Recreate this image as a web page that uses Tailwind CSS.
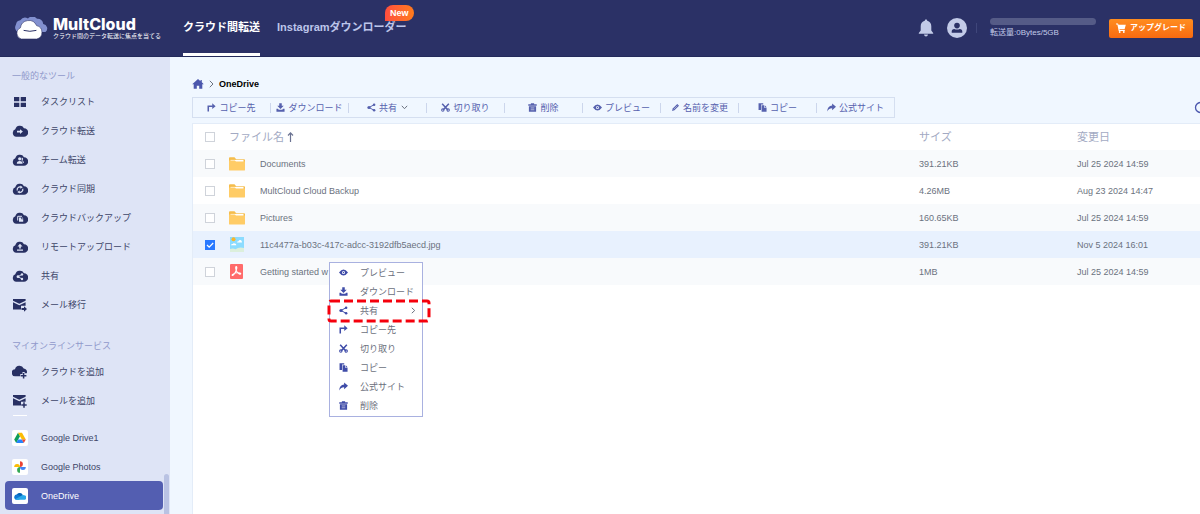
<!DOCTYPE html>
<html lang="ja">

<head>
    <meta charset="UTF-8">
    <title>MultCloud - OneDrive</title>
    <meta name="viewport" content="width=device-width, initial-scale=1.0">
    <script src="https://cdn.jsdelivr.net/npm/@tailwindcss/browser@4"></script>
</head>

<body class="flex h-screen flex-col overflow-hidden bg-[#f0f7ff] font-['Liberation_Sans','Noto_Sans_CJK_JP',sans-serif] text-[9px] leading-3 text-[#6b7280]">

    <!-- Shared icons -->
    <svg class="hidden">
        <symbol id="i-cloud" viewBox="0 0 16 12">
            <path fill="#283063" d="M4.2 11.8A3.9 3.9 0 0 1 3.3 4.3 4.7 4.7 0 0 1 12 3.2a4.3 4.3 0 0 1-.2 8.6z" />
        </symbol>
        <symbol id="i-copyto" viewBox="0 0 10 10">
            <path fill="none" stroke="currentColor" stroke-width="1.7" d="M1.4 9.5V3.6H6.5" />
            <path fill="currentColor" d="M5.8 .4 9.6 3.6 5.8 6.8z" />
        </symbol>
        <symbol id="i-download" viewBox="0 0 10 10">
            <path fill="currentColor" d="M3.6 .3h2.8v2.8h2.200L5 6.600 1.400 3.100h2.200zM.5 6.500h1.600l1 1h3.800l1-1h1.600v3.200H.5z" />
        </symbol>
        <symbol id="i-share" viewBox="0 0 10 10">
            <path fill="none" stroke="currentColor" stroke-width="1.1" d="M7.9 1.9 2.2 5l5.7 3.1" />
            <circle cx="2.2" cy="5" r="1.8" fill="currentColor" />
            <circle cx="7.9" cy="1.9" r="1.4" fill="currentColor" />
            <circle cx="7.9" cy="8.1" r="1.4" fill="currentColor" />
        </symbol>
        <symbol id="i-cut" viewBox="0 0 10 10">
            <path fill="none" stroke="currentColor" stroke-width="1.7" d="M1.3 .8 7.4 7.6M8.7 .8 2.6 7.6" />
            <circle cx="2" cy="7.8" r="1.3" fill="none" stroke="currentColor" stroke-width="1.2" />
            <circle cx="8" cy="7.8" r="1.3" fill="none" stroke="currentColor" stroke-width="1.2" />
        </symbol>
        <symbol id="i-trash" viewBox="0 0 10 10">
            <path fill="currentColor" d="M3.2.2h3.600v1.200h2.900v1.600H.3V1.400h2.900zM1 3.500h8V9.800H1z" />
            <path stroke="#fff" stroke-width=".6" d="M3 5.500h4M3 7.500h4" />
        </symbol>
        <symbol id="i-eye" viewBox="0 0 10 10">
            <path fill="currentColor" fill-rule="evenodd" d="M0 5Q5-1.800 10 5 5 11.800 0 5zM5 3.300a1.700 1.700 0 1 0 0 3.400 1.700 1.700 0 0 0 0-3.400z" />
            <circle cx="5" cy="5" r=".8" fill="currentColor" />
        </symbol>
        <symbol id="i-pencil" viewBox="0 0 10 10">
            <path fill="currentColor" d="M1.200 8.800 1.900 6.200 7 1.100 8.900 3 3.800 8.100z" />
            <path stroke="#fff" stroke-width=".5" d="M3 7 7 3" />
        </symbol>
        <symbol id="i-copy" viewBox="0 0 10 10">
            <path fill="currentColor" d="M.6.3h5.200v1.500H3.400v6H.6zM4 2.600h2.800v2.800h2.700v4.300H4zM7.500 2.600l2 2.100h-2z" />
        </symbol>
        <symbol id="i-site" viewBox="0 0 10 10">
            <path fill="currentColor" d="M5.700.6 10 4.300 5.700 8V5.900C3.400 5.800 1.700 6.800.2 9.400.4 5.400 2.300 3 5.700 2.700z" />
        </symbol>
        <symbol id="i-folder" viewBox="0 0 16 14">
            <path fill="#f5bd4c" d="M0 1.200Q0 .3.900.3h4.600l1.700 1.900h7.900q.9 0 .9.900V6H0z" />
            <path fill="#fff" d="M1.500 2.900h13v3h-13z" />
            <path fill="#ffcc66" d="M0 3.500h5.800L7 4.500h9v8.200q0 .9-.9.900H.9q-.9 0-.9-.9z" />
        </symbol>
        <symbol id="i-mail" viewBox="0 0 16 14">
            <path fill="#283063" d="M1 1h12.600v1.700L7.300 5.800 1 2.700zM1 4.300l6.300 3 6.300-3v3.500H9v3.700H1z" />
        </symbol>
    </svg>

    <header class="flex h-[57px] shrink-0 items-center border-b border-[#232a5b] bg-[#2b3166] pl-[14px] pr-[7px] text-white">
        <a href="#" class="flex w-[169px] items-center">
            <svg class="mr-[5px] h-[23px] w-[34px]" viewBox="0 0 34 23">
                <path fill="#8290cf" d="M3.500 15A5.500 5.500 0 0 1 2 7.500 5 5 0 0 1 6.300 3.200 6 6 0 0 1 14 1.500a6 6 0 0 1 9 .2 5.500 5.500 0 0 1 6.200 5.300A4.500 4.500 0 0 1 31.500 15z" />
                <path fill="#fff" stroke="#2b3166" stroke-width=".6" d="M7.200 22A6 6 0 0 1 6.400 10.800 8.500 8.500 0 0 1 22.600 8.600 6.900 6.900 0 0 1 22.800 22z" />
                <path fill="none" stroke="#2b3166" stroke-width="1" stroke-linecap="round" d="M10 13.500q5.700 1.700 12 0" />
            </svg>
            <span class="whitespace-nowrap">
                <span class="block font-['Inter',sans-serif] text-[16px] leading-4 font-extrabold">MultCloud</span>
                <span class="block text-[6px] leading-2">クラウド間のデータ転送に焦点を当てる</span>
            </span>
        </a>
        <nav class="flex h-full gap-[17px] text-[11px] font-bold whitespace-nowrap">
            <a href="#" class="flex items-center border-b-3 border-white">クラウド間転送</a>
            <a href="#" class="relative flex items-center border-b-3 border-transparent text-[#bcc5ea]">Instagramダウンローダー
                <span class="absolute top-[5px] -right-[7px] rounded-full rounded-bl-none bg-linear-to-r from-[#ff4d3d] to-[#ff7a1a] px-[5px] py-[2px] text-[9px] leading-3 text-white">New</span>
            </a>
        </nav>
        <div class="ml-auto flex items-center">
            <button type="button" aria-label="通知">
                <svg class="h-[18px] w-4" viewBox="0 0 16 18">
                    <path fill="#c3cbe8" d="M8 .5c.8 0 1.200.5 1.200 1.300 2.700.6 4.100 2.600 4.100 5.400v4.300l1.900 2.500v.8H.8V14l1.900-2.500V7.200c0-2.800 1.400-4.800 4.100-5.400C6.800 1 7.200.5 8 .5zM6 15.600h4c-.2 1.200-1 1.900-2 1.900s-1.800-.7-2-1.900z" />
                </svg>
            </button>
            <button type="button" aria-label="アカウント" class="ml-[13px]">
                <svg class="size-5" viewBox="0 0 20 20">
                    <circle cx="10" cy="10" r="10" fill="#c3cbe8" />
                    <circle cx="10" cy="7.600" r="2.800" fill="#2b3166" />
                    <path fill="#2b3166" d="M4.700 14.800v-1.300Q4.700 11 7.300 11q2.700 1.200 5.400 0 2.600 0 2.600 2.500v1.300z" />
                </svg>
            </button>
            <div class="ml-[9px] h-[10px] w-px bg-[#3f467a]"></div>
            <div class="ml-[13px] w-[106px] text-[8px] leading-[10px] text-[#c3cbe8]">
                <div class="mb-[3px] h-[7px] rounded-full bg-[#555b87]"></div>
                転送量:0Bytes/5GB
            </div>
            <button type="button" class="ml-[13px] flex h-[19px] w-[84px] items-center justify-center gap-1 rounded-xs bg-linear-to-b from-[#ff8d1f] to-[#f96a10] text-[8px] font-bold whitespace-nowrap">
                <svg class="size-[10px]" viewBox="0 0 10 10">
                    <path fill="#fff" d="M0 .5h2l.5 1.300h7.300L8.600 6.200H3.500l.1.800h5.200v.9H2.700L1.400 1.500H0z" />
                    <circle cx="3.700" cy="9" r=".9" fill="#fff" />
                    <circle cx="7.800" cy="9" r=".9" fill="#fff" />
                </svg>
                アップグレード
            </button>
        </div>
    </header>

    <div class="flex min-h-0 flex-1">
        <aside class="relative w-[170px] shrink-0 overflow-hidden bg-[#dee4f6] text-[#3d4568]">
            <h2 class="flex h-[30px] items-center pt-2 pl-3 text-[#9099cb]">一般的なツール</h2>
            <nav>
                <a href="#" class="flex h-[29px] items-center gap-[13px] pl-3">
                    <svg class="h-[14px] w-4" viewBox="0 0 16 14">
                        <path fill="#283063" d="M2 2h5.300v4.300H2zM8.700 2H14v4.300H8.700zM2 7.700h5.300V12H2zM8.700 7.700H14V12H8.700z" />
                    </svg>
                    タスクリスト
                </a>
                <a href="#" class="flex h-[29px] items-center gap-[13px] pl-3">
                    <svg class="h-3 w-4" viewBox="0 0 16 12">
                        <use href="#i-cloud" />
                        <path fill="#dee4f6" d="M5 5.800h3V4.200L10.900 6.600 8 9V7.400H5z" />
                    </svg>
                    クラウド転送
                </a>
                <a href="#" class="flex h-[29px] items-center gap-[13px] pl-3">
                    <svg class="h-3 w-4" viewBox="0 0 16 12">
                        <use href="#i-cloud" />
                        <circle cx="7.700" cy="4.800" r="1.600" fill="#dee4f6" />
                        <path fill="#dee4f6" d="M4.800 9.700Q4.800 7 7.700 7t2.900 2.700zM9.800 3.400a1.500 1.500 0 0 1 .3 2.900q1.800.6 1.800 2.600h-.8q-.2-1.600-1.500-2.400z" />
                    </svg>
                    チーム転送
                </a>
                <a href="#" class="flex h-[29px] items-center gap-[13px] pl-3">
                    <svg class="h-3 w-4" viewBox="0 0 16 12">
                        <use href="#i-cloud" />
                        <path fill="none" stroke="#dee4f6" stroke-width="1.200" d="M5.300 7.500A2.700 2.700 0 0 1 9 4.200M10.700 5.700A2.700 2.700 0 0 1 7 9" />
                        <path fill="#dee4f6" d="M8.300 2.600 10.800 4.200 8.300 5.700zM7.700 7.500 5.200 9l2.500 1.600z" />
                    </svg>
                    クラウド同期
                </a>
                <a href="#" class="flex h-[29px] items-center gap-[13px] pl-3">
                    <svg class="h-3 w-4" viewBox="0 0 16 12">
                        <use href="#i-cloud" />
                        <path fill="none" stroke="#dee4f6" d="M5.700 8.500V4.300h4.300" />
                        <path fill="#dee4f6" d="M7 5.600h2.300v1.600h1.900v2.600H7zM10 5.200l1.500 1.400H10z" />
                    </svg>
                    クラウドバックアップ
                </a>
                <a href="#" class="flex h-[29px] items-center gap-[13px] pl-3">
                    <svg class="h-3 w-4" viewBox="0 0 16 12">
                        <use href="#i-cloud" />
                        <path fill="#dee4f6" d="M8 2.800 10.500 5.400H8.800v2.200H7.200V5.400H5.500zM5 8.600h6v1.200H5z" />
                    </svg>
                    リモートアップロード
                </a>
                <a href="#" class="flex h-[29px] items-center gap-[13px] pl-3">
                    <svg class="h-3 w-4" viewBox="0 0 16 12">
                        <use href="#i-cloud" />
                        <path fill="none" stroke="#dee4f6" stroke-width=".9" d="M10 4.400 6 6.700l4 2.300" />
                        <circle cx="6" cy="6.700" r="1.400" fill="#dee4f6" />
                        <circle cx="10" cy="4.400" r="1.200" fill="#dee4f6" />
                        <circle cx="10" cy="9" r="1.200" fill="#dee4f6" />
                    </svg>
                    共有
                </a>
                <a href="#" class="flex h-[29px] items-center gap-[13px] pl-3">
                    <svg class="h-[14px] w-4" viewBox="0 0 16 14">
                        <use href="#i-mail" />
                        <path fill="#283063" d="M9.500 10h2.500V8.300l3 2.700-3 2.700V12H9.500z" />
                    </svg>
                    メール移行
                </a>
            </nav>
            <h2 class="flex h-[38px] items-center pt-4 pl-3 text-[#9099cb]">マイオンラインサービス</h2>
            <nav>
                <a href="#" class="flex h-[29px] items-center gap-[13px] pl-3">
                    <svg class="h-[14px] w-4" viewBox="0 0 16 14">
                        <path fill="#283063" d="M3.700 11.300A3.400 3.400 0 0 1 3 4.200 4.600 4.600 0 0 1 11.700 3.400a3.700 3.700 0 0 1 3.100 4.900H12.700V7h-2.200v2H8.300v2.300z" />
                        <path stroke="#283063" stroke-width="1.500" d="M11.600 8v5.600M8.800 10.800h5.600" />
                    </svg>
                    クラウドを追加
                </a>
                <a href="#" class="flex h-[29px] items-center gap-[13px] pl-3">
                    <svg class="h-[14px] w-4" viewBox="0 0 16 14">
                        <use href="#i-mail" />
                        <path stroke="#283063" stroke-width="1.500" d="M12 8.300v5.400M9.300 11h5.400" />
                    </svg>
                    メールを追加
                </a>
                <hr class="mb-[7px] ml-[13px] w-[14px] border-white">
                <a href="#" class="flex h-[29px] items-center gap-[13px] pl-3">
                    <span class="flex size-4 items-center justify-center rounded-xs bg-white">
                        <svg class="size-3" viewBox="0 0 12 12">
                            <path fill="#0f9d58" d="M4 .8 6 4.300 2.200 11 .2 7.600z" />
                            <path fill="#fbbc04" d="M4 .8h4l3.800 6.800H7.900z" />
                            <path fill="#2684fc" d="M4.100 7.600h3.800L9.800 11H2.200z" />
                            <path fill="#ea4335" d="M7.900 7.600h3.900L9.800 11z" />
                        </svg>
                    </span>
                    Google Drive1
                </a>
                <a href="#" class="flex h-[29px] items-center gap-[13px] pl-3">
                    <span class="flex size-4 items-center justify-center rounded-xs bg-white">
                        <svg class="size-3" viewBox="0 0 12 12">
                            <path fill="#ea4335" d="M6 .2a2.900 2.900 0 0 1 0 5.800z" />
                            <path fill="#4285f4" d="M11.800 6A2.900 2.900 0 0 1 6 6z" />
                            <path fill="#34a853" d="M6 11.800A2.900 2.900 0 0 1 6 6z" />
                            <path fill="#fbbc04" d="M.2 6A2.900 2.900 0 0 1 6 6z" />
                        </svg>
                    </span>
                    Google Photos
                </a>
                <a href="#" class="mr-[7px] ml-[5px] flex h-[29px] items-center gap-[13px] rounded-sm bg-[#535eb1] pl-[7px] text-white">
                    <span class="flex size-4 items-center justify-center rounded-xs bg-white">
                        <svg class="h-2 w-3" viewBox="0 0 12 8">
                            <path fill="#0364b8" d="M2.500 4.500A3.300 3.300 0 0 1 8.800 2.900L8 5z" />
                            <path fill="#0f78d4" d="M2.500 7.800A2.500 2.500 0 0 1 3.300 2.500L8 5 5 7.800z" />
                            <path fill="#28a8ea" d="M1 7.200 7 4q1.400-1.500 3-.8a2.300 2.300 0 0 1-.2 4.600H2.500Q1.500 7.800 1 7.200z" />
                        </svg>
                    </span>
                    OneDrive
                </a>
            </nav>
            <div class="absolute right-px bottom-0 h-10 w-[5px] rounded-t-full bg-[#b9c2e3]"></div>
        </aside>

        <main class="relative flex min-w-0 flex-1 flex-col pl-[22px]">
            <div class="flex h-10 items-center gap-[5px] pt-[14px]">
                <a href="#" aria-label="ホーム">
                    <svg class="h-[10px] w-3 text-[#4b57ad]" viewBox="0 0 12 10">
                        <path fill="currentColor" d="M6 0 8.500 2.200V.9h1.300v2.400L11.800 5.300H10.300V9.800H7.200V6.800H4.800v3H1.700V5.300H.2z" />
                    </svg>
                </a>
                <svg class="h-2 w-[5px]" viewBox="0 0 5 8">
                    <path fill="none" stroke="#6b7280" d="M.8.8 4 4 .8 7.200" />
                </svg>
                <span class="font-bold text-black">OneDrive</span>
            </div>

            <div class="flex items-center justify-between">
                <div class="flex h-[21px] w-[703px] shrink-0 items-center border border-[#d5dff0] text-[#5661ae] *:flex *:h-[10px] *:flex-1 *:items-center *:justify-center *:gap-[3px] *:border-r *:border-[#ccd6ec] *:whitespace-nowrap *:last:border-r-0">
                    <button type="button"><svg class="size-[9px]"><use href="#i-copyto" /></svg>コピー先</button>
                    <button type="button"><svg class="size-[9px]"><use href="#i-download" /></svg>ダウンロード</button>
                    <button type="button"><svg class="size-[9px]"><use href="#i-share" /></svg>共有
                        <svg class="ml-px h-[5px] w-[7px]" viewBox="0 0 7 5">
                            <path fill="none" stroke="#6b7280" d="M.8.8 3.500 3.700 6.200.8" />
                        </svg>
                    </button>
                    <button type="button"><svg class="size-[9px]"><use href="#i-cut" /></svg>切り取り</button>
                    <button type="button"><svg class="size-[9px]"><use href="#i-trash" /></svg>削除</button>
                    <button type="button"><svg class="size-[9px]"><use href="#i-eye" /></svg>プレビュー</button>
                    <button type="button"><svg class="size-[9px]"><use href="#i-pencil" /></svg>名前を変更</button>
                    <button type="button"><svg class="size-[9px]"><use href="#i-copy" /></svg>コピー</button>
                    <button type="button"><svg class="size-[9px]"><use href="#i-site" /></svg>公式サイト</button>
                </div>
                <button type="button" aria-label="検索" class="-mr-2 shrink-0">
                    <svg class="size-[14px]" viewBox="0 0 14 14">
                        <circle cx="6.500" cy="6.500" r="5" fill="none" stroke="#4b57ad" stroke-width="1.300" />
                        <path stroke="#4b57ad" stroke-width="1.300" d="m10 10 3 3" />
                    </svg>
                </button>
            </div>

            <div class="mt-[5px] flex-1 border-t border-l border-[#e3ecf8] bg-white">
                <table class="w-full table-fixed text-left">
                    <thead class="text-[11px] text-[#a3aac3]">
                        <tr class="h-[26px]">
                            <th class="w-9 pl-3"><input type="checkbox" aria-label="すべて選択" class="block size-[10px] appearance-none border border-[#cfd3da] bg-white"></th>
                            <th class="w-[31px]"></th>
                            <th class="font-normal"><span class="-ml-[31px] flex items-center gap-[3px]">ファイル名
                                <svg class="h-[10px] w-[7px]" viewBox="0 0 7 10">
                                    <path fill="none" stroke="#6b7392" stroke-width="1.200" d="M3.500 10V1M1 3.500l2.500-2.600L6 3.500" />
                                </svg></span>
                            </th>
                            <th class="w-[158px] font-normal">サイズ</th>
                            <th class="w-[123px] font-normal">変更日</th>
                        </tr>
                    </thead>
                    <tbody>
                        <tr class="h-[27px] bg-[#f8fafc]">
                            <td class="pl-3"><input type="checkbox" aria-label="Documents" class="block size-[10px] appearance-none border border-[#cfd3da] bg-white"></td>
                            <td><svg class="h-[14px] w-4"><use href="#i-folder" /></svg></td>
                            <td>Documents</td>
                            <td>391.21KB</td>
                            <td>Jul 25 2024 14:59</td>
                        </tr>
                        <tr class="h-[27px]">
                            <td class="pl-3"><input type="checkbox" aria-label="MultCloud Cloud Backup" class="block size-[10px] appearance-none border border-[#cfd3da] bg-white"></td>
                            <td><svg class="h-[14px] w-4"><use href="#i-folder" /></svg></td>
                            <td>MultCloud Cloud Backup</td>
                            <td>4.26MB</td>
                            <td>Aug 23 2024 14:47</td>
                        </tr>
                        <tr class="h-[27px] bg-[#f8fafc]">
                            <td class="pl-3"><input type="checkbox" aria-label="Pictures" class="block size-[10px] appearance-none border border-[#cfd3da] bg-white"></td>
                            <td><svg class="h-[14px] w-4"><use href="#i-folder" /></svg></td>
                            <td>Pictures</td>
                            <td>160.65KB</td>
                            <td>Jul 25 2024 14:59</td>
                        </tr>
                        <tr class="h-[27px] bg-[#e8f1fe]">
                            <td class="pl-3">
                                <span class="relative block size-[10px]">
                                    <input type="checkbox" checked aria-label="11c4477a-b03c-417c-adcc-3192dfb5aecd.jpg" class="block size-[10px] appearance-none bg-white checked:bg-[#2979ff]">
                                    <svg class="pointer-events-none absolute inset-0 size-[10px]" viewBox="0 0 10 10">
                                        <path fill="none" stroke="#fff" stroke-width="1.200" d="m2 5 2.200 2.200L8.200 3" />
                                    </svg>
                                </span>
                            </td>
                            <td>
                                <svg class="ml-px h-[15px] w-[14px]" viewBox="0 0 14 15">
                                    <path fill="#8cdcff" d="M0 0h14v15H0z" />
                                    <circle cx="3.500" cy="2.300" r="2" fill="#f7b62d" />
                                    <path fill="#fff" d="M7 5.500q.2-1.300 1.500-1.300Q9 2.700 10.500 3t1.500 2.500zM1 8.300q.3-1.400 1.600-1.200Q3.600 5.600 5 6.600q1.300.3 1.300 1.700z" />
                                    <path fill="#dcefdc" d="M0 12q3-1 5.500.3Q9 9.500 14 11v4H0z" />
                                </svg>
                            </td>
                            <td>11c4477a-b03c-417c-adcc-3192dfb5aecd.jpg</td>
                            <td>391.21KB</td>
                            <td>Nov 5 2024 16:01</td>
                        </tr>
                        <tr class="h-[27px] bg-[#f8fafc]">
                            <td class="pl-3"><input type="checkbox" aria-label="Getting started" class="block size-[10px] appearance-none border border-[#cfd3da] bg-white"></td>
                            <td>
                                <svg class="ml-px h-[15px] w-[13px]" viewBox="0 0 13 15">
                                    <rect width="13" height="15" rx="1" fill="#ff6b6b" />
                                    <path fill="none" stroke="#fff" stroke-width="1.100" d="M6.200 2.500c1.200 0 .4 3.300-.6 5.300S2.800 12 2.200 11.300s2.300-2.200 4.800-2.500 4 .4 3.700 1.100-2.300-.1-3.600-1.900-1.900-5.500-.9-5.500z" />
                                </svg>
                            </td>
                            <td>Getting started w</td>
                            <td>1MB</td>
                            <td>Jul 25 2024 14:59</td>
                        </tr>
                    </tbody>
                </table>
            </div>

            <!-- Context menu -->
            <div class="absolute top-[205px] left-[159px] w-[94px] border border-[#a9b1e0] bg-white pb-px text-[#6b6f7c] *:flex *:h-[19px] *:w-full *:items-center *:gap-3 *:pl-[9px] *:whitespace-nowrap">
                <button type="button"><svg class="size-[9px] text-[#3f4ca8]"><use href="#i-eye" /></svg>プレビュー</button>
                <button type="button"><svg class="size-[9px] text-[#3f4ca8]"><use href="#i-download" /></svg>ダウンロード</button>
                <button type="button"><svg class="size-[9px] text-[#3f4ca8]"><use href="#i-share" /></svg>共有
                    <svg class="mr-[6px] ml-auto h-[7px] w-[5px]" viewBox="0 0 5 7">
                        <path fill="none" stroke="#6b7280" d="M.8.8 3.700 3.500.8 6.200" />
                    </svg>
                </button>
                <button type="button"><svg class="size-[9px] text-[#3f4ca8]"><use href="#i-copyto" /></svg>コピー先</button>
                <button type="button"><svg class="size-[9px] text-[#3f4ca8]"><use href="#i-cut" /></svg>切り取り</button>
                <button type="button"><svg class="size-[9px] text-[#3f4ca8]"><use href="#i-copy" /></svg>コピー</button>
                <button type="button"><svg class="size-[9px] text-[#3f4ca8]"><use href="#i-site" /></svg>公式サイト</button>
                <button type="button"><svg class="size-[9px] text-[#3f4ca8]"><use href="#i-trash" /></svg>削除</button>
            </div>
            <svg class="pointer-events-none absolute top-[242px] left-[157px] h-6 w-[104px]" viewBox="0 0 104 24">
                <rect x="2" y="2" width="100" height="20" rx="2" fill="none" stroke="#f5000c" stroke-width="3" stroke-dasharray="9 4" />
            </svg>
        </main>
    </div>
</body>

</html>
